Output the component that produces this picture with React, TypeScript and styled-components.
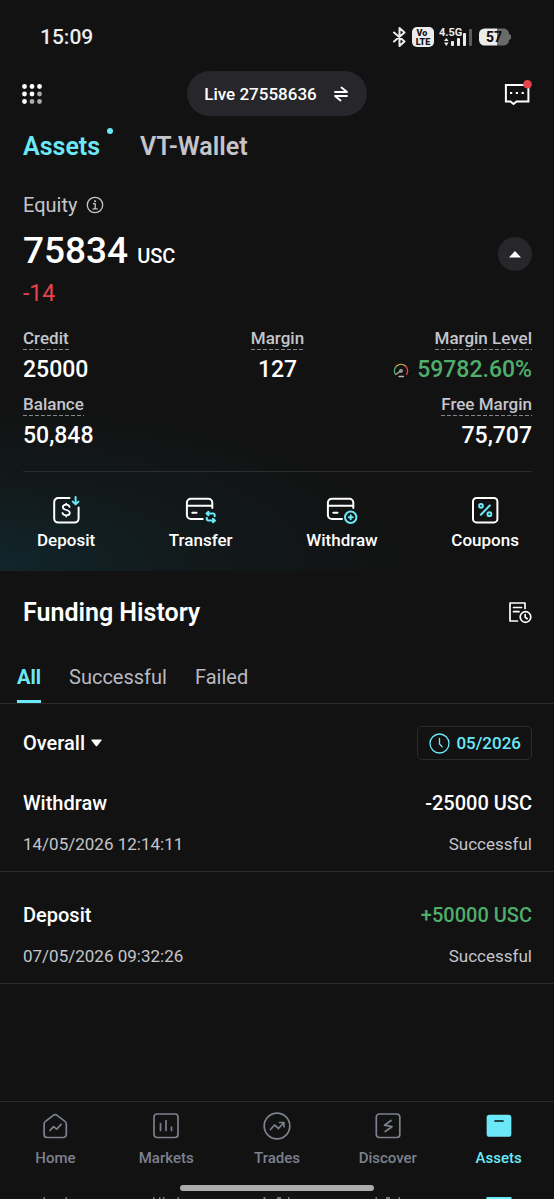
import React from "react";
import styled, { createGlobalStyle } from "styled-components";

const c = {
  bg: "#121212",
  panel: "#26262b",
  line: "#2b2b2d",
  text: "#ffffff",
  muted: "#c4c5cb",
  cyan: "#6ce9f8",
  green: "#4fae6b",
  red: "#e8434a",
  nav: "#7c818d",
};

const GlobalStyle = createGlobalStyle`
  * { box-sizing: border-box; }
  body { margin: 0; background: ${c.bg}; }
  button, select { font: inherit; color: inherit; background: none; border: 0; padding: 0; margin: 0; cursor: pointer; }
  a { color: inherit; text-decoration: none; }
  svg { display: block; flex: none; }
  h1, h2, h3, p, dl, dt, dd, ul { margin: 0; padding: 0; }
  ul { list-style: none; }
`;

const Page = styled.div`
  min-height: 100vh;
  display: flex;
  flex-direction: column;
  overflow: hidden;
  background: ${c.bg};
  color: ${c.text};
  font-family: Roboto, "Liberation Sans", sans-serif;
  font-weight: 500;
`;

const StatusBar = styled.div`
  display: flex;
  justify-content: space-between;
  align-items: center;
  height: 71px;
  padding: 2px 42px 0 40px;
  color: #ececec;
`;

const Clock = styled.time`
  font-size: 21px;
  line-height: 24px;
`;

const StatusIcons = styled.div`
  display: flex;
  align-items: center;
  gap: 5px;
`;

const Hero = styled.section`
  padding: 0 22px 0 23px;
  background: radial-gradient(ellipse 420px 160px at 0 98%, #11252b 0%, #11202380 48%, transparent 100%);
`;

const Header = styled.header`
  display: grid;
  grid-template-columns: 1fr auto 1fr;
  align-items: center;
  height: 45px;
  padding: 0 22px;

  & > :last-child { justify-self: end; }
`;

const IconButton = styled.button`
  display: flex;
  justify-self: start;
  position: relative;
`;

const AccountPill = styled.button`
  display: flex;
  align-items: center;
  gap: 17px;
  height: 45px;
  padding: 0 19px 0 17px;
  border-radius: 23px;
  background: ${c.panel};
  font-size: 17px;
`;

const WalletTabs = styled.div`
  display: flex;
  gap: 40px;
  padding: 16px 23px 0;
  font-size: 25px;
  font-weight: 600;
  line-height: 30px;
`;

const WalletTab = styled.button<{ $active?: boolean }>`
  position: relative;
  color: ${(p) => (p.$active ? c.cyan : c.muted)};

  &::after {
    content: "";
    display: ${(p) => (p.$active ? "block" : "none")};
    position: absolute;
    top: -4px;
    right: -13px;
    width: 6px;
    height: 6px;
    border-radius: 50%;
    background: ${c.cyan};
  }
`;

const EquityLabel = styled.div`
  display: flex;
  align-items: center;
  gap: 9px;
  padding-top: 31px;
  font-size: 20px;
  font-weight: 400;
  line-height: 24px;
  color: ${c.muted};
`;

const EquityRow = styled.div`
  display: flex;
  justify-content: space-between;
  align-items: center;
  height: 64px;
`;

const EquityValue = styled.p`
  display: flex;
  align-items: baseline;
  gap: 9px;
  padding-top: 8px;
  font-size: 37px;
  line-height: 44px;
`;

const Currency = styled.span`
  font-size: 20px;
`;

const Collapse = styled.button`
  display: grid;
  place-items: center;
  width: 34px;
  height: 34px;
  margin-top: 10px;
  border-radius: 50%;
  background: ${c.panel};
`;

const Change = styled.p`
  font-size: 23px;
  font-weight: 400;
  line-height: 26px;
  color: ${c.red};
`;

const Stats = styled.dl`
  display: grid;
  grid-template-columns: 1fr 1fr 1fr;
  row-gap: 10px;
  padding: 21px 0 21px;
  border-bottom: 1px solid ${c.line};
`;

const Stat = styled.div<{ $align?: string }>`
  display: flex;
  flex-direction: column;
  align-items: ${(p) => p.$align || "flex-start"};
  gap: 6px;

  &:last-child { grid-column: 3; }
`;

const StatName = styled.dt`
  padding-bottom: 2px;
  font-size: 17px;
  font-weight: 500;
  line-height: 20px;
  color: ${c.muted};
  background: repeating-linear-gradient(90deg, #85868d 0 4px, transparent 4px 6px) left bottom / 100% 1px no-repeat;
`;

const StatValue = styled.dd<{ $good?: boolean }>`
  display: flex;
  align-items: center;
  gap: 8px;
  font-size: 23px;
  line-height: 28px;
  color: ${(p) => (p.$good ? c.green : c.text)};
`;

const Actions = styled.div`
  display: flex;
  justify-content: space-between;
  padding: 24px 13px 21px 14px;
`;

const Action = styled.button`
  display: flex;
  flex-direction: column;
  align-items: center;
  gap: 6px;
  font-size: 17px;
  line-height: 20px;
`;

const HistoryHead = styled.div`
  display: flex;
  justify-content: space-between;
  align-items: center;
  padding: 26px 22px 0 23px;
`;

const Title = styled.h1`
  font-size: 25px;
  font-weight: 600;
  line-height: 32px;
`;

const FilterTabs = styled.div`
  display: flex;
  gap: 28px;
  padding: 35px 17px 0;
  border-bottom: 1px solid ${c.line};
`;

const FilterTab = styled.button<{ $active?: boolean }>`
  padding: 0 0 10px;
  border-bottom: 3px solid ${(p) => (p.$active ? c.cyan : "transparent")};
  font-size: 20px;
  font-weight: ${(p) => (p.$active ? 700 : 400)};
  line-height: 26px;
  color: ${(p) => (p.$active ? c.cyan : "#b9bac0")};
`;

const Filters = styled.div`
  display: flex;
  justify-content: space-between;
  align-items: center;
  padding: 22px 22px 0 23px;
`;

const SelectWrap = styled.label`
  display: flex;
  align-items: center;
  gap: 6px;
`;

const Select = styled.select`
  appearance: none;
  font-size: 20px;
  line-height: 24px;
`;

const MonthButton = styled.button`
  display: flex;
  align-items: center;
  gap: 6px;
  height: 34px;
  padding: 0 10px 0 11px;
  border: 1px solid ${c.line};
  border-radius: 5px;
  font-size: 17px;
  color: ${c.cyan};
`;

const Record = styled.li`
  display: grid;
  grid-template-columns: auto auto;
  justify-content: space-between;
  row-gap: 19px;
  padding: 31px 22px 17px 23px;
  border-bottom: 1px solid ${c.line};

  & > :nth-child(even) { text-align: right; }
`;

const RecordMain = styled.span<{ $good?: boolean }>`
  font-size: 20px;
  line-height: 24px;
  color: ${(p) => (p.$good ? c.green : c.text)};
`;

const RecordSub = styled.span`
  font-size: 17px;
  font-weight: 400;
  line-height: 20px;
  color: ${c.muted};
`;

const BottomBar = styled.footer`
  margin-top: auto;
  border-top: 1px solid ${c.line};
`;

const Nav = styled.nav`
  display: grid;
  grid-template-columns: repeat(5, 1fr);
  padding-top: 10px;
`;

const NavLink = styled.a<{ $active?: boolean }>`
  display: flex;
  flex-direction: column;
  align-items: center;
  gap: 8px;
  font-size: 15px;
  line-height: 20px;
  color: ${(p) => (p.$active ? c.cyan : c.nav)};
`;

const HomeIndicator = styled.div`
  width: 35%;
  height: 6px;
  margin: 17px auto 6px;
  border-radius: 3px;
  background: #acacac;
`;

const PeekRow = styled.div`
  display: grid;
  grid-template-columns: repeat(5, 1fr);
  justify-items: center;
  height: 2px;
`;

const Line = ({ w, h, sw = 2, children }: { w: number; h: number; sw?: number; children: React.ReactNode }) => (
  <svg width={w} height={h} viewBox={`0 0 ${w} ${h}`} fill="none" stroke="currentColor" strokeWidth={sw} strokeLinecap="round" strokeLinejoin="round" aria-hidden="true">
    {children}
  </svg>
);

const card = "M17.7 23H5.9a4 4 0 0 1-4-4V6.7a4 4 0 0 1 4-4h17.4a4 4 0 0 1 4 4V12M2 9.7h25M7.3 16.7h4.2";

const actions = [
  {
    name: "Deposit",
    icon: (
      <>
        <path d="M19.5 2H8.2a4 4 0 0 0-4 4v16.6a4 4 0 0 0 4 4h16.4a4 4 0 0 0 4-4V11.5" />
        <path strokeWidth="1.8" d="M19.6 10.9c-.4-1.3-1.6-2.2-3.4-2.2-2 0-3.4 1-3.4 2.6 0 3.7 7 1.7 7 5.4 0 1.7-1.5 2.7-3.6 2.7-2 0-3.3-.9-3.7-2.4M16.2 7.6v1.1M16.2 19.5v1.1" />
        <path stroke={c.cyan} d="M25.6 1v7M22.7 5.6l2.9 2.8 2.9-2.8" />
      </>
    ),
  },
  {
    name: "Transfer",
    icon: (
      <>
        <path d={card} />
        <path stroke={c.cyan} strokeWidth="2" d="M22 17.5h6q1.7 0 1.7 1.7v1M23.5 15.7l-2 1.8 2 1.8M29.5 24.5h-6q-1.7 0-1.7-1.7v-1M28 22.7l2 1.8-2 1.8" />
      </>
    ),
  },
  {
    name: "Withdraw",
    icon: (
      <>
        <path d={card.replace("M17.7", "M16")} />
        <circle cx="24.7" cy="21.3" r="5.7" stroke={c.cyan} />
        <path stroke={c.cyan} d="M24.7 19.3v4M22.7 21.3h4" />
      </>
    ),
  },
  {
    name: "Coupons",
    icon: (
      <>
        <rect x="4" y="2" width="24.4" height="24.4" rx="3.5" />
        <g stroke={c.cyan}>
          <circle cx="12" cy="9.8" r="1.9" />
          <circle cx="20.4" cy="18.2" r="1.9" />
          <path d="M11.8 18.8l9-9.3" />
        </g>
      </>
    ),
  },
];

const navItems = [
  {
    name: "Home",
    icon: <path d="M12 3.6L4.4 9.4a3 3 0 0 0-1.3 2.5V22.5a3 3 0 0 0 3 3h16.2a3 3 0 0 0 3-3V11.9a3 3 0 0 0-1.3-2.5L16.4 3.6a3.5 3.5 0 0 0-4.4 0zM9 18.4l3.6-3.8 3.1 2.6 4.3-4.8" />,
    peek: "M2.5 1h1.5M24.5 1h1.5",
  },
  {
    name: "Markets",
    icon: (
      <>
        <rect x="2" y="2" width="24" height="23.5" rx="3" />
        <path d="M8.5 11.5v7M14 8.5v10M19.5 15v3.5" />
      </>
    ),
    peek: "M1 1h1.5M7 1h1.5M11 1h1.5M25.5 1h1.5",
  },
  {
    name: "Trades",
    icon: (
      <>
        <circle cx="14" cy="14" r="12.8" />
        <path d="M7.5 17.5l4-4.5 4 3.5 5-5.5M16.5 10.5h4.5v4.2" />
      </>
    ),
    peek: "M0.5 1h2M14 1h4M25 1h1.5",
  },
  {
    name: "Discover",
    icon: (
      <>
        <rect x="2.3" y="2" width="23.5" height="23.5" rx="3" />
        <path d="M17 8.5l-6.5 4.7 7.5 1.5-6.8 4.8" />
      </>
    ),
    peek: "M1.5 1h1.5M12 1h4M24.5 1h1.5",
  },
  {
    name: "Assets",
    icon: (
      <>
        <rect x="2.5" y="3.5" width="23" height="20.5" rx="2" fill={c.cyan} />
        <path stroke={c.bg} d="M10 9h8" />
      </>
    ),
    peek: "M1.5 1h25",
  },
];

const records = [
  { type: "Withdraw", amount: "-25000 USC", time: "14/05/2026 12:14:11" },
  { type: "Deposit", amount: "+50000 USC", time: "07/05/2026 09:32:26", good: true },
];

export default function App() {
  return (
    <Page>
      <GlobalStyle />
      <StatusBar>
        <Clock>15:09</Clock>
        <StatusIcons>
          <Line w={15} h={20}>
            <path d="M2 5.5l10.5 9L7.5 19V1l5 4.5L2 14.5" />
          </Line>
          <svg width="22" height="20" viewBox="0 0 22 20" aria-hidden="true">
            <rect y="0" width="22" height="20" rx="5" fill="#ececec" />
            <g fill="#151515" fontFamily="Roboto, sans-serif" fontWeight="900" fontSize="9" textAnchor="middle">
              <text x="10" y="9">Vo</text>
              <text x="11" y="18">LTE</text>
            </g>
          </svg>
          <svg width="34" height="20" viewBox="0 0 34 20" fill="#ececec" aria-hidden="true">
            <text x="0" y="9" fontSize="11" fontWeight="700" fontFamily="Roboto, sans-serif">4.5G</text>
            <path d="M5 14l2.3-3L9.6 14zM5 15.5h4.6L7.3 19z" />
            <rect x="12" y="14" width="3" height="5" rx="1" />
            <rect x="18" y="11" width="3" height="8" rx="1" />
            <rect x="24" y="6" width="3" height="13" rx="1" />
            <rect x="30" y="2" width="3" height="17" rx="1" fill="#5c5c5c" />
          </svg>
          <svg width="34" height="20" viewBox="0 0 34 20" aria-hidden="true">
            <path d="M19 1.5h6c4 0 6 2.5 6 5.5l2 1v4l-2 1c0 3-2 5.5-6 5.5h-6z" fill="#6a6a6a" />
            <path d="M19 1.5H6.5a5.500 5.500 0 0 0-5.500 5.500v6a5.500 5.500 0 0 0 5.500 5.500H19z" fill="#ececec" />
            <text x="16" y="15" fontSize="14" fontWeight="800" textAnchor="middle" fontFamily="Roboto, sans-serif" fill="#101010">57</text>
          </svg>
        </StatusIcons>
      </StatusBar>

      <Header>
        <IconButton aria-label="Menu">
          <svg width="20" height="20" viewBox="0 0 20 20" fill="#fff" aria-hidden="true">
            {[2.5, 10, 17.5].map((y, r) =>
              [2.5, 10, 17.5].map((x, k) => <circle key={`${x}-${y}`} cx={x} cy={y} r="2.4" opacity={r + k > 2 ? 0.65 : 1} />)
            )}
          </svg>
        </IconButton>
        <AccountPill>
          Live 27558636
          <Line w={14} h={16}>
            <path strokeWidth="1.8" d="M1 6h12L7.5 1.5M13 10H1l5.5 4.5" />
          </Line>
        </AccountPill>
        <IconButton aria-label="Messages">
          <svg width="28" height="28" viewBox="0 0 28 28" fill="none" stroke="#fff" strokeWidth="2" aria-hidden="true">
            <path d="M1.9 5h22.5v16.5H12.5l-3 2.5-3-2.5H1.9z" />
            <path strokeWidth="2.2" d="M6 13h2.2M11.8 13H14M17.6 13h2.2" />
            <circle cx="23.5" cy="4.3" r="4.3" fill={c.red} stroke="none" />
          </svg>
        </IconButton>
      </Header>

      <WalletTabs>
        <WalletTab $active>Assets</WalletTab>
        <WalletTab>VT-Wallet</WalletTab>
      </WalletTabs>

      <Hero>
        <EquityLabel>
          Equity
          <Line w={18} h={18} sw={1}>
            <circle cx="9" cy="9" r="7.7" strokeWidth="1.3" />
            <path d="M7.5 7.7h1.7v5M7 12.9h4.2" strokeWidth="1.3" />
            <circle cx="9" cy="5.2" r=".6" fill="currentColor" />
          </Line>
        </EquityLabel>
        <EquityRow>
          <EquityValue>
            75834 <Currency>USC</Currency>
          </EquityValue>
          <Collapse aria-label="Collapse">
            <svg width="12" height="7" viewBox="0 0 12 7" fill="#fff" aria-hidden="true">
              <path d="M6 0l6 6.5H0z" />
            </svg>
          </Collapse>
        </EquityRow>
        <Change>-14</Change>

        <Stats>
          <Stat>
            <StatName>Credit</StatName>
            <StatValue>25000</StatValue>
          </Stat>
          <Stat $align="center">
            <StatName>Margin</StatName>
            <StatValue>127</StatValue>
          </Stat>
          <Stat $align="flex-end">
            <StatName>Margin Level</StatName>
            <StatValue $good>
              <Line w={16} h={16} sw={1}>
                <g strokeWidth="1.3">
                  <path stroke={c.green} d="M2.5 12.5A7 7 0 0 1 3 4.5" />
                  <path stroke="#d8b04a" d="M3.5 4A7 7 0 0 1 12.5 4" />
                  <path stroke={c.red} d="M13 4.5a7 7 0 0 1 .5 8" />
                  <path stroke="#b5b5b5" d="M3.5 12L7 9.5M6 14.5h4.5" />
                  <circle cx="8" cy="8.8" r="1.2" stroke="#b5b5b5" />
                </g>
              </Line>
              59782.60%
            </StatValue>
          </Stat>
          <Stat>
            <StatName>Balance</StatName>
            <StatValue>50,848</StatValue>
          </Stat>
          <Stat $align="flex-end">
            <StatName>Free Margin</StatName>
            <StatValue>75,707</StatValue>
          </Stat>
        </Stats>

        <Actions>
          {actions.map((a) => (
            <Action key={a.name}>
              <Line w={32} h={28}>{a.icon}</Line>
              {a.name}
            </Action>
          ))}
        </Actions>
      </Hero>

      <HistoryHead>
        <Title>Funding History</Title>
        <IconButton aria-label="History records">
          <Line w={24} h={24}>
            <g strokeWidth="1.7">
              <path d="M9.5 20H2V2h15v5.5M5.5 6.5h8M5.5 10.7h5.5" />
              <circle cx="17.5" cy="16" r="5.3" />
              <path d="M17.2 13.5v2.7l2 1.5" />
            </g>
          </Line>
        </IconButton>
      </HistoryHead>

      <FilterTabs>
        <FilterTab $active>All</FilterTab>
        <FilterTab>Successful</FilterTab>
        <FilterTab>Failed</FilterTab>
      </FilterTabs>

      <Filters>
        <SelectWrap>
          <Select aria-label="Record type">
            <option>Overall</option>
          </Select>
          <svg width="11" height="8" viewBox="0 0 11 8" fill="#fff" aria-hidden="true">
            <path d="M1 .5h9q1 0 .5 1L6.2 7q-.7.8-1.4 0L.5 1.5Q0 .5 1 .5z" />
          </svg>
        </SelectWrap>
        <MonthButton>
          <Line w={21} h={21} sw={1}>
            <g strokeWidth="1.3">
              <circle cx="10.5" cy="10.5" r="9.5" />
              <path d="M10.5 5.5v5.5l2.7 2.7" />
            </g>
          </Line>
          05/2026
        </MonthButton>
      </Filters>

      <ul>
        {records.map((r) => (
          <Record key={r.time}>
            <RecordMain>{r.type}</RecordMain>
            <RecordMain $good={r.good}>{r.amount}</RecordMain>
            <RecordSub>{r.time}</RecordSub>
            <RecordSub>Successful</RecordSub>
          </Record>
        ))}
      </ul>

      <BottomBar>
        <Nav>
          {navItems.map((n) => (
            <NavLink key={n.name} href="#" $active={n.name === "Assets"}>
              <Line w={28} h={28} sw={1.7}>{n.icon}</Line>
              {n.name}
            </NavLink>
          ))}
        </Nav>
        <HomeIndicator />
        <PeekRow>
          {navItems.map((n) => (
            <svg key={n.name} width="28" height="2" viewBox="0 0 28 2" stroke={n.name === "Assets" ? c.cyan : "#77777a"} strokeWidth="2" aria-hidden="true">
              <path d={n.peek} />
            </svg>
          ))}
        </PeekRow>
      </BottomBar>
    </Page>
  );
}
